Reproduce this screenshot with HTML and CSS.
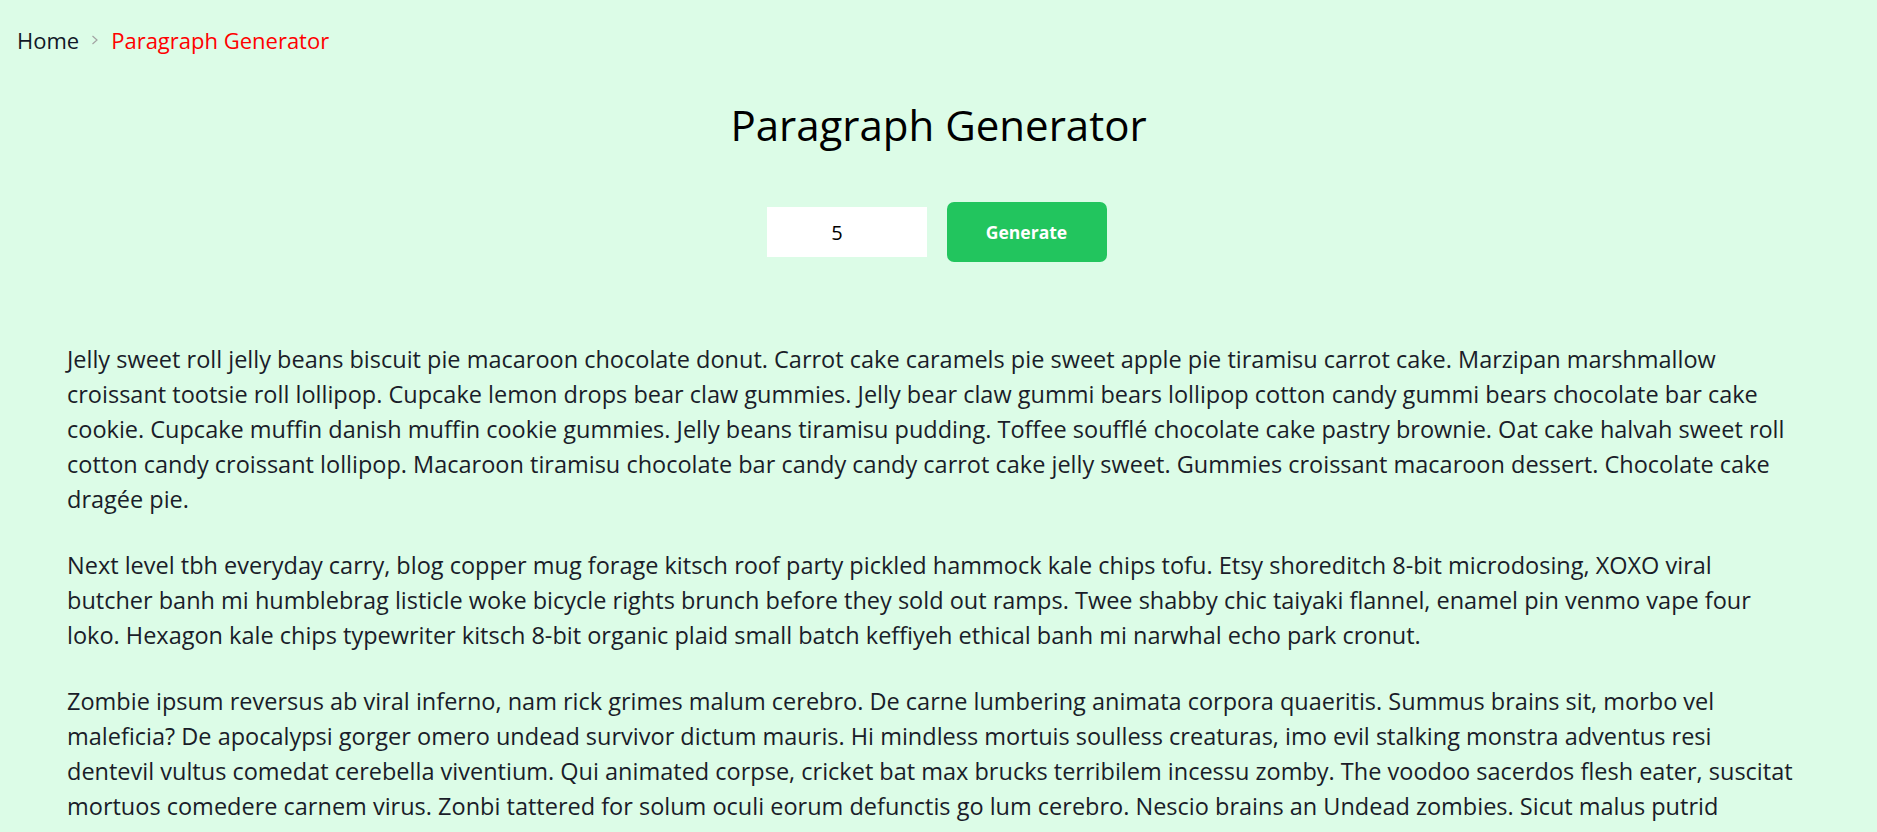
FILE: index.html
```html
<!DOCTYPE html>
<html lang="en">
<head>
<meta charset="utf-8">
<title>Paragraph Generator</title>
<link rel="stylesheet" href="styles.css">
</head>
<body>
<nav class="breadcrumb">
  <a class="crumb" href="#">Home</a>
  <svg class="chev" width="8" height="10" viewBox="0 0 8 10"><path d="M1.5 1 L6 5 L1.5 9" fill="none" stroke="#a3a3a3" stroke-width="1.2"/></svg>
  <span class="crumb current">Paragraph Generator</span>
</nav>
<main>
  <h1 class="title">Paragraph Generator</h1>
  <div class="controls">
    <input class="count" type="number" value="5">
    <button class="generate">Generate</button>
  </div>
  <section class="output">
    <p>Jelly sweet roll jelly beans biscuit pie macaroon chocolate donut. Carrot cake caramels pie sweet apple pie tiramisu carrot cake. Marzipan marshmallow<br>
croissant tootsie roll lollipop. Cupcake lemon drops bear claw gummies. Jelly bear claw gummi bears lollipop cotton candy gummi bears chocolate bar cake<br>
cookie. Cupcake muffin danish muffin cookie gummies. Jelly beans tiramisu pudding. Toffee soufflé chocolate cake pastry brownie. Oat cake halvah sweet roll<br>
cotton candy croissant lollipop. Macaroon tiramisu chocolate bar candy candy carrot cake jelly sweet. Gummies croissant macaroon dessert. Chocolate cake<br>
dragée pie.</p>
    <p>Next level tbh everyday carry, blog copper mug forage kitsch roof party pickled hammock kale chips tofu. Etsy shoreditch 8-bit microdosing, XOXO viral<br>
butcher banh mi humblebrag listicle woke bicycle rights brunch before they sold out ramps. Twee shabby chic taiyaki flannel, enamel pin venmo vape four<br>
loko. Hexagon kale chips typewriter kitsch 8-bit organic plaid small batch keffiyeh ethical banh mi narwhal echo park cronut.</p>
    <p>Zombie ipsum reversus ab viral inferno, nam rick grimes malum cerebro. De carne lumbering animata corpora quaeritis. Summus brains sit, morbo vel<br>
maleficia? De apocalypsi gorger omero undead survivor dictum mauris. Hi mindless mortuis soulless creaturas, imo evil stalking monstra adventus resi<br>
dentevil vultus comedat cerebella viventium. Qui animated corpse, cricket bat max brucks terribilem incessu zomby. The voodoo sacerdos flesh eater, suscitat<br>
mortuos comedere carnem virus. Zonbi tattered for solum oculi eorum defunctis go lum cerebro. Nescio brains an Undead zombies. Sicut malus putrid<br>
voodoo horror. Nigh tofth eliv ingdead.</p>
  </section>
</main>
</body>
</html>
```
FILE: styles.css
```css
* { box-sizing: border-box; }
html, body { margin: 0; padding: 0; }
body {
  background: #dcfce7;
  font-family: "Open Sans", "Noto Sans", sans-serif;
  color: #111827;
}
.breadcrumb {
  display: flex;
  align-items: center;
  gap: 12px;
  padding: 26px 17px 0;
  height: 54px;
  font-size: 22px;
  line-height: 28px;
}
.crumb { color: #111827; text-decoration: none; }
.crumb.current { color: #ff0000; }
.chev { display: block; }
main { display: flex; flex-direction: column; align-items: center; }
.title {
  margin: 43px 0 0;
  font-size: 42px;
  line-height: 56px;
  font-weight: 400;
  color: #000;
}
.controls {
  display: flex;
  align-items: center;
  gap: 20px;
  margin-top: 49px;
  margin-right: 4px;
}
.count {
  width: 160px;
  height: 50px;
  border: none;
  background: #fff;
  padding: 0 19px 0 0;
  text-align: center;
  font-family: inherit;
  font-size: 20px;
  color: #000;
  outline: none;
  -moz-appearance: textfield;
}
.count::-webkit-inner-spin-button, .count::-webkit-outer-spin-button { -webkit-appearance: none; margin: 0; }
.generate {
  width: 160px;
  height: 60px;
  border: none;
  border-radius: 7px;
  background: #22c55e;
  color: #fff;
  font-family: inherit;
  font-size: 17.5px;
  font-weight: 700;
}
.output {
  align-self: stretch;
  padding: 0 16px 0 67px;
  margin-top: 80px;
}
.output p {
  margin: 0 0 31px;
  font-size: 23.5px;
  line-height: 35px;
  color: #1a1d29;
}
```
